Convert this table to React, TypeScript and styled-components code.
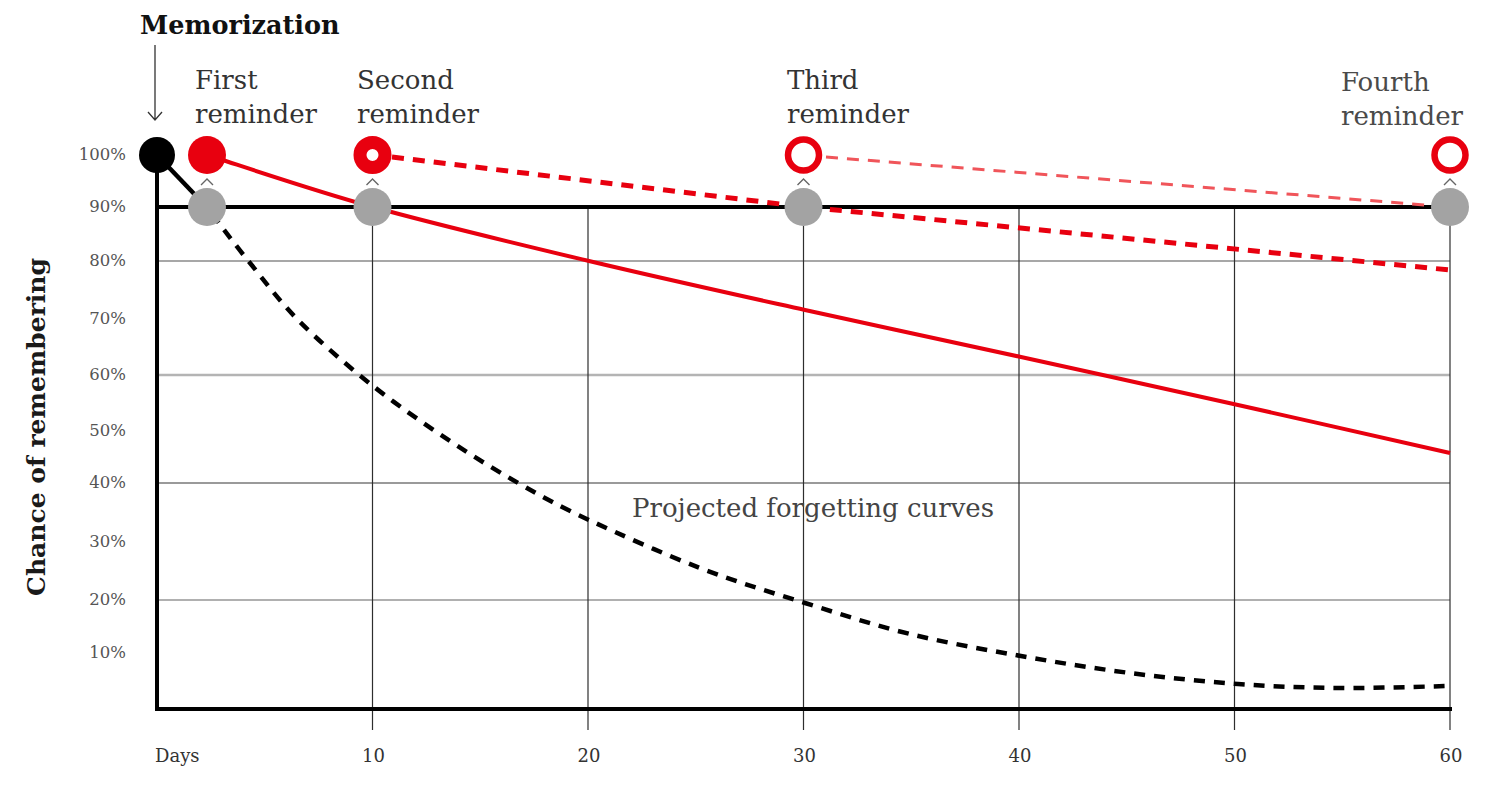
import React from "react";
import styled, { createGlobalStyle } from "styled-components";

const GlobalStyle = createGlobalStyle`
  html, body {
    margin: 0;
    padding: 0;
    background: #ffffff;
  }
`;

// chart geometry
const X0 = 157;
const X_END = 1450;
const DAY = (X_END - X0) / 60;
const Y_TOP = 207;
const Y_BASE = 709;
const dayX = (d: number) => X0 + d * DAY;

const yTicks = [
  { label: "100%", y: 155 },
  { label: "90%", y: 207 },
  { label: "80%", y: 261 },
  { label: "70%", y: 319 },
  { label: "60%", y: 375 },
  { label: "50%", y: 431 },
  { label: "40%", y: 483 },
  { label: "30%", y: 542 },
  { label: "20%", y: 600 },
  { label: "10%", y: 653 },
];

const gridRows = [
  { y: 261, tone: "#8a8a8a", w: 1.6 },
  { y: 375, tone: "#b4b4b4", w: 2.4 },
  { y: 483, tone: "#9a9a9a", w: 2 },
  { y: 600, tone: "#b0b0b0", w: 2 },
];

const days = [10, 20, 30, 40, 50, 60];

const reminders = [
  { x: 207, lines: ["First", "reminder"], kind: "solid" as const, labelX: 195 },
  { x: dayX(10), lines: ["Second", "reminder"], kind: "thick" as const, labelX: 357 },
  { x: dayX(30), lines: ["Third", "reminder"], kind: "ring" as const, labelX: 787 },
  { x: dayX(60), lines: ["Fourth", "reminder"], kind: "ring" as const, labelX: 1341 },
];

// smooth path through points (catmull-rom -> bezier)
const smooth = (pts: [number, number][]) => {
  let d = `M${pts[0][0]},${pts[0][1]}`;
  for (let i = 0; i < pts.length - 1; i++) {
    const p0 = pts[i - 1] || pts[i];
    const p1 = pts[i];
    const p2 = pts[i + 1];
    const p3 = pts[i + 2] || p2;
    const c1x = p1[0] + (p2[0] - p0[0]) / 6;
    const c1y = p1[1] + (p2[1] - p0[1]) / 6;
    const c2x = p2[0] - (p3[0] - p1[0]) / 6;
    const c2y = p2[1] - (p3[1] - p1[1]) / 6;
    d += ` C${c1x.toFixed(1)},${c1y.toFixed(1)} ${c2x.toFixed(1)},${c2y.toFixed(1)} ${p2[0]},${p2[1]}`;
  }
  return d;
};

const forgetting = smooth([
  [212, 214],
  [250, 263],
  [300, 322],
  [373, 386],
  [450, 441],
  [520, 484],
  [589, 520],
  [700, 568],
  [805, 603],
  [910, 634],
  [1021, 656],
  [1130, 673],
  [1238, 684],
  [1340, 688],
  [1450, 686],
]);

const firstCurve = smooth([
  [207, 155],
  [373, 207],
  [589, 261],
  [805, 310],
  [1021, 357],
  [1238, 405],
  [1450, 453],
]);

const Page = styled.div`
  width: 1512px;
  height: 788px;
  background: #ffffff;
  overflow: hidden;
`;

const Chart = styled.svg`
  display: block;
  width: 1512px;
  height: 788px;
`;

const Title = styled.text`
  font-family: "DejaVu Serif", "Liberation Serif", serif;
  font-weight: 700;
  font-size: 25.5px;
  fill: #111111;
`;

const AxisTitle = styled.text`
  font-family: "DejaVu Serif", "Liberation Serif", serif;
  font-weight: 700;
  font-size: 25px;
  fill: #1a1a1a;
`;

const ReminderLabel = styled.text<{ $muted?: boolean }>`
  font-family: "DejaVu Serif", "Liberation Serif", serif;
  font-weight: 400;
  font-size: 26px;
  fill: ${(p) => (p.$muted ? "#4a4a4a" : "#333333")};
`;

const Note = styled.text`
  font-family: "DejaVu Serif", "Liberation Serif", serif;
  font-size: 26px;
  fill: #444444;
`;

const TickLabel = styled.text`
  font-family: "DejaVu Serif", "Liberation Serif", serif;
  font-size: 16.5px;
  fill: #555555;
`;

const DayLabel = styled.text`
  font-family: "DejaVu Serif", "Liberation Serif", serif;
  font-size: 18px;
  fill: #333333;
`;

const Rule = styled.line<{ $tone: string; $w: number }>`
  stroke: ${(p) => p.$tone};
  stroke-width: ${(p) => p.$w};
`;

const Curve = styled.path<{ $tone: string; $w: number; $dash?: string }>`
  fill: none;
  stroke: ${(p) => p.$tone};
  stroke-width: ${(p) => p.$w};
  stroke-dasharray: ${(p) => p.$dash || "none"};
  stroke-linecap: butt;
`;

const Dot = styled.circle<{ $tone: string }>`
  fill: ${(p) => p.$tone};
`;

const Ring = styled.circle<{ $w: number }>`
  fill: #ffffff;
  stroke: #e8000f;
  stroke-width: ${(p) => p.$w};
`;

const Caret = styled.path`
  fill: none;
  stroke: #666666;
  stroke-width: 1.4;
`;

const Pointer = styled.path`
  fill: none;
  stroke: #333333;
  stroke-width: 1.3;
`;

const RED = "#e8000f";

export default function App() {
  return (
    <Page>
      <GlobalStyle />
      <Chart viewBox="0 0 1512 788">
        <Title x={140} y={34}>Memorization</Title>
        <Pointer d="M155,45 L155,120 M148,112 L155,120 L162,112" />

        {reminders.map((r, i) =>
          r.lines.map((line, j) => (
            <ReminderLabel
              key={`${i}-${j}`}
              x={r.labelX}
              y={(i === 3 ? 91 : 89) + j * 34}
              $muted={i === 3}
            >
              {line}
            </ReminderLabel>
          ))
        )}

        <AxisTitle transform="translate(45,427) rotate(-90)" textAnchor="middle">
          Chance of remembering
        </AxisTitle>

        {yTicks.map((t) => (
          <TickLabel key={t.label} x={126} y={t.y + 5} textAnchor="end">
            {t.label}
          </TickLabel>
        ))}

        {gridRows.map((g) => (
          <Rule key={g.y} x1={X0} x2={X_END} y1={g.y} y2={g.y} $tone={g.tone} $w={g.w} />
        ))}

        {days.map((d) => (
          <Rule key={d} x1={dayX(d)} x2={dayX(d)} y1={Y_TOP} y2={730} $tone="#2e2e2e" $w={1.2} />
        ))}

        <Rule x1={X0} x2={X_END} y1={Y_TOP} y2={Y_TOP} $tone="#000" $w={4} />
        <Rule x1={X0} x2={X_END + 2} y1={Y_BASE} y2={Y_BASE} $tone="#000" $w={4} />
        <Rule x1={X0} x2={X0} y1={155} y2={Y_BASE + 2} $tone="#000" $w={4} />

        <DayLabel x={155} y={762}>Days</DayLabel>
        {days.map((d) => (
          <DayLabel key={d} x={dayX(d) + 1} y={762} textAnchor="middle">
            {d}
          </DayLabel>
        ))}

        <Note x={632} y={517}>Projected forgetting curves</Note>

        {/* curves */}
        <Curve d="M157,155 L200,200" $tone="#000" $w={4.5} />
        <Curve d={forgetting} $tone="#000" $w={4.5} $dash="11 9" />
        <Curve d={firstCurve} $tone={RED} $w={4} />
        <Curve d="M392,157 L805,207 L1450,270" $tone={RED} $w={5} $dash="12 9" />
        <Curve d="M826,157 L1450,207" $tone="#f0555a" $w={3} $dash="12 9" />

        {/* markers */}
        <Dot cx={X0} cy={155} r={18} $tone="#000" />
        {reminders.map((r) => (
          <g key={r.labelX}>
            <Caret d={`M${r.x - 6},185 L${r.x},179 L${r.x + 6},185`} />
            <Dot cx={r.x} cy={Y_TOP} r={19} $tone="#a3a3a3" />
            {r.kind === "solid" && <Dot cx={r.x} cy={155} r={19} $tone={RED} />}
            {r.kind === "thick" && <Ring cx={r.x} cy={155} r={12.5} $w={13} />}
            {r.kind === "ring" && <Ring cx={r.x} cy={155} r={15.5} $w={6.5} />}
          </g>
        ))}
      </Chart>
    </Page>
  );
}
